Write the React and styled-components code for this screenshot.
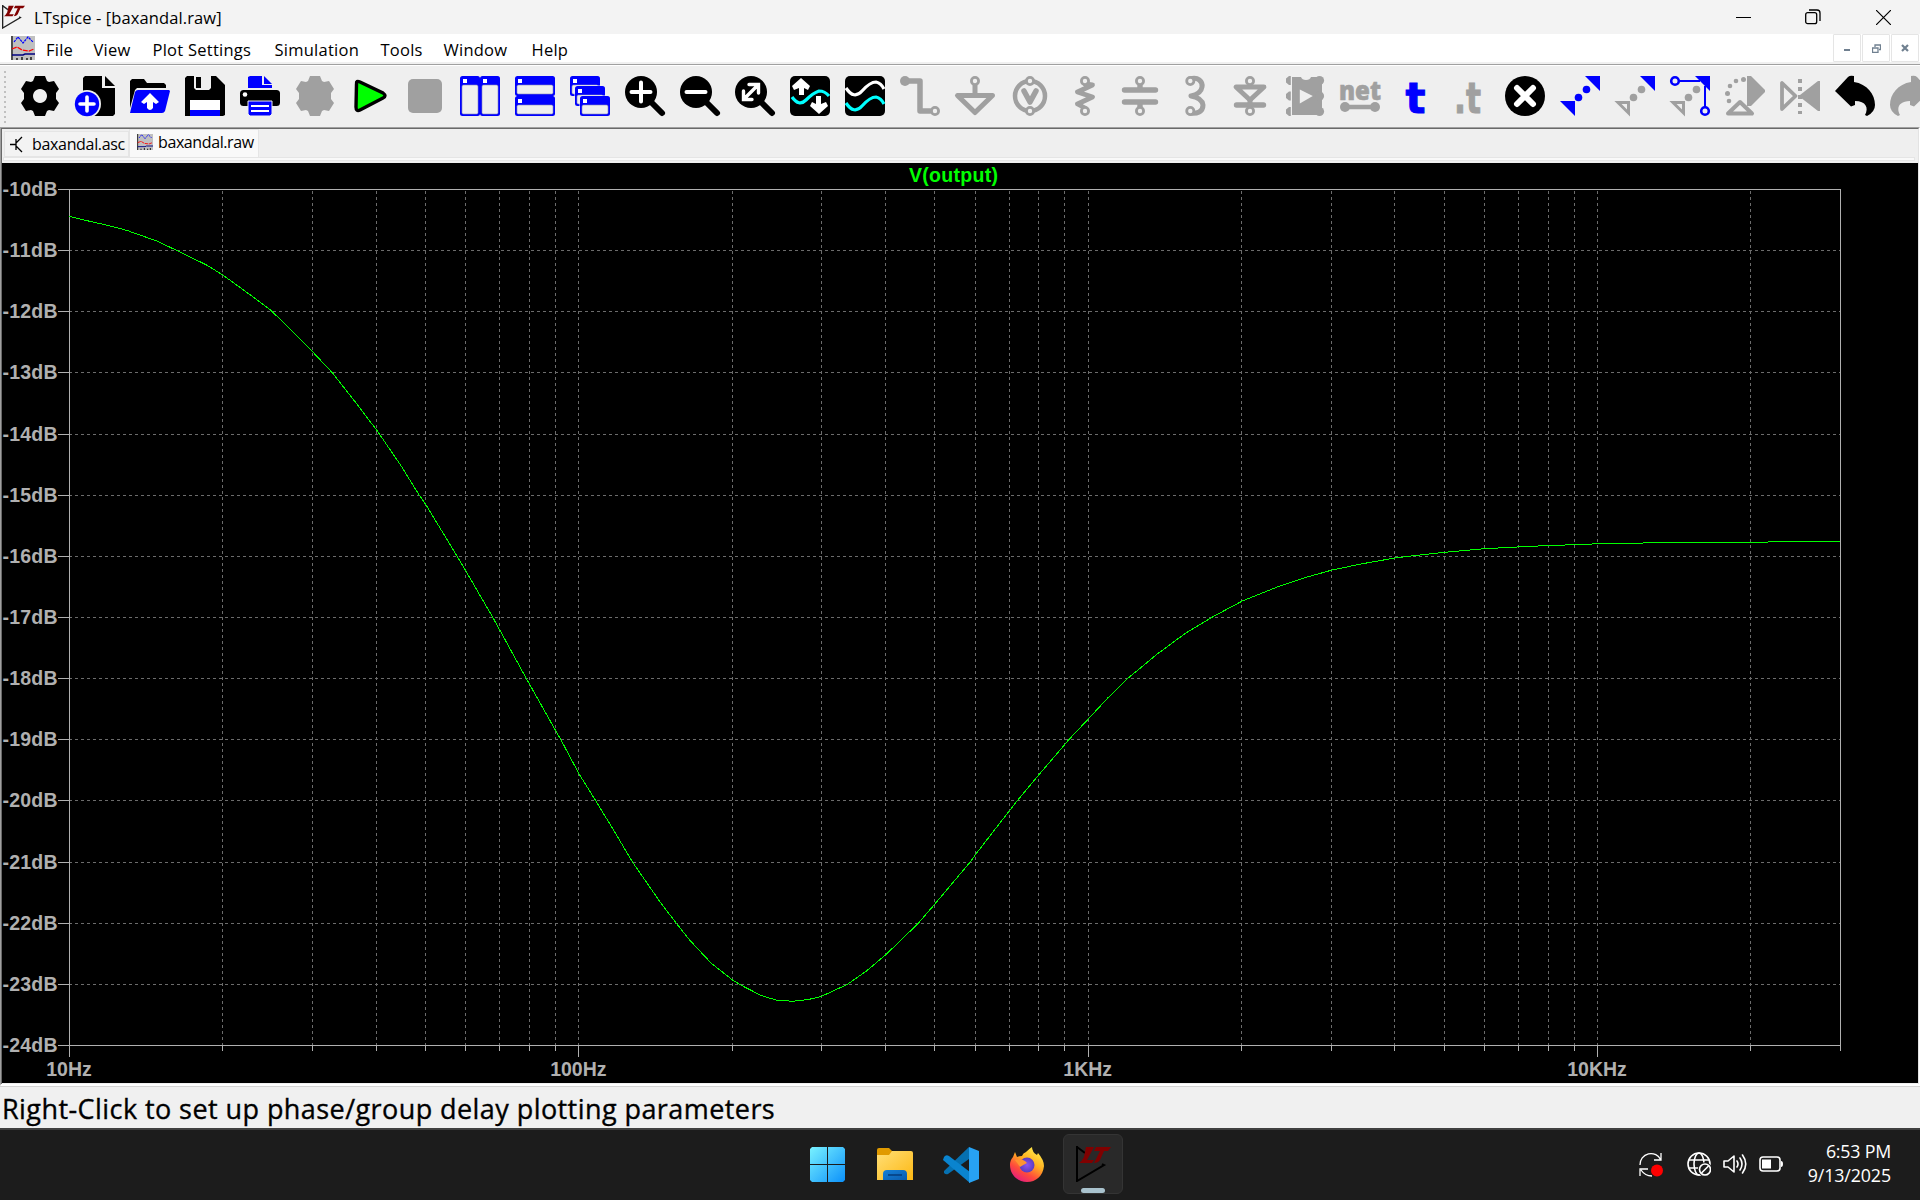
import React from 'react';
import styled, { createGlobalStyle } from 'styled-components';

const UI = '"Open Sans", "Noto Sans", sans-serif';
const GRAY = '#a0a0a0';
const BLUE = '#0000ff';
const FACE = '#efefef';

const Global = createGlobalStyle`
  *{box-sizing:border-box}
  html,body{margin:0;padding:0;background:${FACE};overflow:hidden}
  body{font-family:${UI};color:#000}
  svg{display:block;flex:none}
`;

const Desktop = styled.div`width:1920px;height:1200px;display:flex;flex-direction:column;overflow:hidden;background:${FACE};`;
const TitleBar = styled.header`height:34px;flex:none;background:#f3f3f3;display:flex;align-items:center;padding-left:2px;`;
const Label = styled.span`
  font-size:${p => p.$size || 16}px;letter-spacing:${p => p.$ls || 0}px;
  width:${p => (p.$w ? p.$w + 'px' : 'auto')};margin-left:${p => p.$ml || 0}px;
  -webkit-text-stroke:${p => p.$heavy || 0}px currentColor;padding-top:${p => p.$drop || 0}px;
  white-space:nowrap;line-height:1.2;flex:none;
`;
const Spacer = styled.div`flex:1;`;
const WindowButton = styled.div`width:${p => p.$w}px;height:34px;display:flex;align-items:center;justify-content:center;`;
const MenuBar = styled.nav`height:28px;flex:none;background:#fff;display:flex;align-items:center;padding-left:11px;`;
const MdiButton = styled.div`width:28px;height:28px;margin-right:1px;border:1px solid #e5e5e5;border-radius:1px;background:#fff;display:flex;align-items:center;justify-content:center;`;
const MenuEdge = styled.div`height:4px;flex:none;border-top:2px solid #f0f0f0;background:linear-gradient(#a0a0a0 0 1px,#fff 1px 2px);`;
const ToolBar = styled.div`height:61px;flex:none;display:flex;align-items:flex-start;padding:10px 0 0 4px;overflow:hidden;`;
const Grip = styled.div`width:2px;height:53px;margin:-5px 14px 0 0;flex:none;background:repeating-linear-gradient(#c0c0c0 0 2px,transparent 2px 5px);`;
const Tool = styled.button`all:unset;flex:none;width:40px;height:40px;margin-right:15px;`;
const Workspace = styled.main`flex:none;height:959px;border-top:1px solid #a0a0a0;border-left:1px solid #a0a0a0;border-right:1px solid #fff;border-bottom:2px solid #fff;`;
const WorkInner = styled.div`height:100%;border-top:1px solid #696969;border-left:1px solid #696969;border-right:1px solid #e3e3e3;display:flex;flex-direction:column;`;
const TabStrip = styled.div`height:28px;flex:none;display:flex;align-items:flex-end;padding-left:2px;`;
const Tab = styled.div`
  height:${p => (p.$active ? 28 : 26)}px;width:${p => (p.$active ? 130 : 125)}px;display:flex;align-items:center;
  border:1px solid #e5e5e5;border-bottom:${p => (p.$active ? '0' : '1px solid #e5e5e5')};
  background:${p => (p.$active ? '#f9f9f9' : '#f3f3f3')};padding:0 0 ${p => (p.$active ? 4 : 0)}px ${p => (p.$active ? 7 : 5)}px;
`;
const PaneEdge = styled.div`height:4px;margin:0 3px 2px 1px;border:1px solid #e5e5e5;background:#f9f9f9;flex:none;`;
const StatusBar = styled.footer`height:42px;flex:none;border-top:1px solid #d4d4d4;background:#f0f0f0;display:flex;align-items:center;padding-left:2px;`;
const Taskbar = styled.div`height:72px;flex:none;border-top:2px solid #404040;background:#1c1c1c;display:flex;align-items:center;color:#fff;`;
const Apps = styled.div`margin-left:810px;display:flex;align-items:center;gap:31px;height:70px;padding-bottom:1px;`;
const AppTile = styled.div`width:60px;height:60px;margin-left:-12px;border-radius:6px;background:#292929;border:1px solid #343434;display:flex;flex-direction:column;align-items:center;justify-content:flex-end;margin-top:-1px;`;
const Running = styled.div`width:24px;height:5px;border-radius:3px;background:#a9c2cd;margin-top:6px;`;
const Tray = styled.div`display:flex;align-items:center;gap:12px;margin-right:24px;padding-bottom:2px;`;
const Clock = styled.div`display:flex;flex-direction:column;align-items:flex-end;width:84px;margin-right:29px;gap:3px;padding-bottom:3px;`;

const GEAR = 'M15 0H25L27 5L29 6L34 5L39 13L36 17V23L39 27L34 35L29 34L27 35L25 40H15L13 35L11 34L6 35L1 27L4 23V17L1 13L6 5L11 6L13 5Z';
const Ring = ({ x, y, c = GRAY, r = 3.6, w = 2.8, fill = FACE }) => <circle cx={x} cy={y} r={r} stroke={c} strokeWidth={w} fill={fill} />;
const Pane = ({ x, y, w, h }) => (
  <g>
    <rect x={x} y={y} width={w} height={h} rx="2.5" fill={BLUE} />
    <rect x={x + 2} y={y + 9} width={w - 4} height={h - 11} rx="1.5" fill={FACE} stroke="#8888b8" strokeWidth=".6" />
    <rect x={x + 3} y={y + 3} width="4" height="4" fill="#fff" />
  </g>
);
const Lens = ({ children }) => (
  <g>
    <path d="M25 25L37 37" stroke="#000" strokeWidth="6" strokeLinecap="round" />
    <circle cx="16" cy="16" r="16" />
    <g stroke="#fff" strokeWidth="4" fill="none" strokeLinecap="round">{children}</g>
  </g>
);
const g = { stroke: GRAY, fill: 'none', strokeLinejoin: 'round', strokeLinecap: 'round' };
const LowTriangle = () => <path d="M3 26.5H13.5V37Z" fill="none" stroke={GRAY} strokeWidth="3" />;
const HighTriangle = () => <path d="M25 0H40V15Z" fill={BLUE} />;
const Dots = ({ c }) => <g fill={c}><circle cx="26.5" cy="13.5" r="3.8" /><circle cx="18.5" cy="21.5" r="3.8" /></g>;
const UNDO = 'M0 15L13 1Q15 -1 19 0V6C32 8 40 18 40 29Q40 36 32 40L30 39C34 32 31 25 20 25V29L16 30.5Z';

const TOOLS = [
  ['Settings', <path d={GEAR + 'M20 13a7 7 0 1 0 .01 0Z'} fillRule="evenodd" />],
  ['New', <><path d="M10 0H27V12H40V38L38 40H10L8 38V2Z" /><path d="M30 0L40 10H30Z" /><circle cx="12" cy="28" r="14" fill={FACE} /><circle cx="12" cy="28" r="12.2" fill={BLUE} /><path d="M12 21V35M5 28H19" stroke="#fff" strokeWidth="3.6" strokeLinecap="round" /></>],
  ['Open', <><path d="M0 5L2 3H14L17 7H34L36 9V12H7L5 14L0 32Z" /><path d="M8 14H39L40 15L35 35Q34 37 32 37H0L5 16Q6 14 8 14Z" fill={BLUE} /><path d="M20 17L29 26L26 28L23 26V32Q20 36 17 32V26L14 28L11 26Z" fill="#fff" /></>],
  ['Save', <><path d="M2 0H31L40 9V39L38 40H0V2Z" /><path d="M9 0H26V12L24 14H11L9 12Z" fill={FACE} /><rect x="11" y="1" width="5" height="11" /><rect x="5" y="24" width="30" height="10" fill="#fff" /><rect x="5" y="34" width="30" height="6" fill={BLUE} /></>],
  ['Print', <><path d="M8 1L10 0H22V9H32V12H8ZM24 0L32 8H24Z" fill={BLUE} /><rect y="14" width="40" height="16" rx="3.5" /><path d="M8 25H32V38L30 40H10L8 38Z" fill={BLUE} stroke={FACE} strokeWidth="1" /><path d="M11 30H29M11 35H29" stroke="#fff" strokeWidth="2" /><circle cx="5" cy="18.5" r="2.3" fill="#fff" /></>],
  ['Control Panel', <path d={GEAR} fill={GRAY} />],
  ['Run', <path d="M6.5 8Q6 4 10 6L33 17Q37 20 33 22L10 34Q6 36 6 31Z" fill="#00ff00" stroke="#000" strokeWidth="3.4" />],
  ['Stop', <rect x="3" y="3" width="34" height="34" rx="5" fill={GRAY} />],
  ['Tile Vertically', <><Pane x={0} y={0} w={20} h={40} /><Pane x={20} y={0} w={20} h={40} /></>],
  ['Tile Horizontally', <><Pane x={0} y={0} w={40} h={20} /><Pane x={0} y={20} w={40} h={20} /></>],
  ['Cascade', <><Pane x={0} y={0} w={30} h={20} /><rect x="4.5" y="9.5" width="31" height="21" fill={FACE} rx="2" /><Pane x={5} y={10} w={30} h={20} /><rect x="9.5" y="19.5" width="31" height="21" fill={FACE} rx="2" /><Pane x={10} y={20} w={30} h={20} /></>],
  ['Zoom In', <Lens><path d="M16 6.5V25.5M6.5 16H25.5" /></Lens>],
  ['Zoom Out', <Lens><path d="M6.5 16H25.5" /></Lens>],
  ['Zoom Fit', <Lens><path d="M9 23L23 9M14 8.5H23.5V17M8.5 15V23.5H17" strokeWidth="3.4" /></Lens>],
  ['Autorange', <><rect width="40" height="40" rx="5" /><path d="M2 21Q9 31 16 24T29 15Q35 15 39 20" stroke="#00ffff" strokeWidth="3.2" fill="none" /><path d="M11 2L20 10L18 14L14 12V19H9V12L4 14L2 10ZM29 38L20 30L22 26L26 28V20H31V28L36 26L38 30Z" fill="#fff" /></>],
  ['Waveforms', <><rect width="40" height="40" rx="5" /><path d="M1 12Q9 24 17 15T31 6Q36 7 39 13" stroke="#fff" strokeWidth="3.2" fill="none" /><path d="M1 27Q9 39 17 30T31 21Q36 22 39 28" stroke="#00ffff" strokeWidth="3.2" fill="none" /></>],
  ['Wire', <><path d="M5 5H20V35H30" {...g} strokeWidth="5.5" /><circle cx="5" cy="5" r="5" fill={GRAY} /><Ring x={35} y={35} /></>],
  ['Ground', <><path d="M20 9V18M2.5 19.5H37.5L20 36.5Z" {...g} strokeWidth="5" /><Ring x={20} y={5} /></>],
  ['Voltage', <><circle cx="20" cy="20" r="15" {...g} strokeWidth="4.5" /><path d="M14 15L20 26L26 15" {...g} strokeWidth="5.5" /><Ring x={20} y={5} /><Ring x={20} y={35} /></>],
  ['Resistor', <><path d="M20 8L27.5 9L12.5 16L27.5 21L12.5 28L20 32" {...g} strokeWidth="4.8" /><Ring x={20} y={5} /><Ring x={20} y={35} /></>],
  ['Capacitor', <><path d="M4.5 14H35.5M4.5 26H35.5M20 9V14M20 26V31" {...g} strokeWidth="5.4" /><Ring x={20} y={5} /><Ring x={20} y={35} /></>],
  ['Inductor', <><path d="M15 3C23 0 28 6 27 11Q26 18 16 20Q27 22 28 29C28 36 22 38 15 37" {...g} strokeWidth="5" /><Ring x={15.3} y={5} /><Ring x={15.3} y={35} /></>],
  ['Diode', <><path d="M6 11H34L20 24Z" {...g} strokeWidth="4.8" /><path d="M6.5 29H33.5" {...g} strokeWidth="5.4" /><path d="M20 24V30" {...g} strokeWidth="5" /><Ring x={20} y={5} /><Ring x={20} y={35} /></>],
  ['Component', <><path d="M7 1H16Q17 4 21 4Q25 4 26 1H37V39H7Z" fill={GRAY} /><g fill={GRAY}>{[4.5, 20, 35.5].map(y => <g key={y}><path d={`M5.8 ${y - 4.5}V${y + 4.5}H4L1 ${y + 2}V${y - 2}L4 ${y - 4.5}Z`} /><circle cx="34.5" cy={y} r="4.6" /></g>)}</g><path d="M14.8 13.5L27.8 20L14.8 27.5Z" fill={FACE} /></>],
  ['Net', <><text x="-1" y="23.5" textLength="42" lengthAdjust="spacingAndGlyphs" fontFamily="Open Sans" fontWeight="800" fontSize="26" fill={GRAY} stroke={GRAY} strokeWidth=".6">net</text><path d="M5 31H35" {...g} strokeWidth="4.6" /><circle cx="5" cy="31" r="5" fill={GRAY} /><circle cx="35" cy="31" r="5" fill={GRAY} /></>],
  ['Text', <text x="10.5" y="36.5" textLength="20" lengthAdjust="spacingAndGlyphs" fontFamily="DejaVu Sans" fontWeight="700" fontSize="43" fill={BLUE} stroke={BLUE} strokeWidth="1">t</text>],
  ['Directive', <text x="4" y="36.5" textLength="27" lengthAdjust="spacingAndGlyphs" fontFamily="DejaVu Sans" fontWeight="700" fontSize="43" fill={GRAY} stroke={GRAY} strokeWidth="1">.t</text>],
  ['Delete', <><circle cx="20" cy="20" r="20" /><path d="M12 12L28 28M28 12L12 28" stroke="#fff" strokeWidth="6" strokeLinecap="round" /></>],
  ['Move', <><HighTriangle /><Dots c={BLUE} /><path d="M0 25H15V40Z" fill={BLUE} /></>],
  ['Copy', <><HighTriangle /><Dots c={GRAY} /><LowTriangle /></>],
  ['Drag', <><HighTriangle /><Dots c={GRAY} /><LowTriangle /><path d="M8 5H30M35 10V32" stroke={BLUE} strokeWidth="2" /><Ring x={5} y={5} c={BLUE} r={3.8} w={2.6} /><Ring x={35} y={35} c={BLUE} r={3.8} w={2.6} /></>],
  ['Rotate', <><path d="M22 0H26L40 14V16L26 30H22Z" fill={GRAY} /><path d="M3 37.5L15 26L27 37.5Z" {...g} strokeWidth="4" /><g fill={GRAY}><circle cx="18.5" cy="3.5" r="2.5" /><circle cx="11" cy="5" r="2.3" /><circle cx="5" cy="10" r="2.3" /><circle cx="2.5" cy="17.5" r="2.5" /><circle cx="4" cy="25" r="2.3" /></g></>],
  ['Mirror', <><path d="M2 7V33L15.5 20Z" {...g} strokeWidth="3.8" /><path d="M20 3V38" stroke={GRAY} strokeWidth="4" strokeDasharray="4 4" /><path d="M38 5H40V35H38L20 21V19Z" fill={GRAY} /></>],
  ['Undo', <path d={UNDO} />],
  ['Redo', <path d={UNDO} transform="translate(40 0) scale(-1 1)" fill={GRAY} />],
];

const LtLogo = ({ s, dark }) => (
  <svg width={s} height={s * 1.03} viewBox="0 0 35 36">
    <path d="M1 1L9 7M1 0V35L28 19L26 18" fill="none" stroke={dark ? '#000' : '#222'} strokeWidth="2" />
    <path d="M10 1H18L11 14H18L16 17H3Q6 15 8 11ZM20 1H35L32 5H28L24 14Q22 17 18 17L24 5H18Z" fill="#800000" />
  </svg>
);
const WaveIcon = ({ w, h }) => (
  <svg width={w} height={h} viewBox="0 0 24 24" preserveAspectRatio="none">
    <rect width="24" height="24" fill="#c0c0c0" />
    <path d="M1 0V24" stroke="#000" strokeWidth="1.2" />
    <path d="M3 6L7 1L12 7L17 1L22 6" stroke="#0000ff" fill="none" strokeWidth="1.2" strokeDasharray="2.5 .8" />
    <path d="M1 13L6 11L11 14L18 15L23 13" stroke="#f00" fill="none" strokeWidth="1.3" strokeDasharray="5 1" />
    <path d="M1 19H12L14 18H24" stroke="#000080" fill="none" strokeWidth="1.4" />
    <path d="M6 24V22M11 24V21M16 24V22M20 24V21" stroke="#000" strokeWidth="1.3" />
  </svg>
);

/* Trace samples in window pixels; OX and OY are the plot's origin */
const TRACE = [
  [69, 216.5], [88, 221], [108, 225.5], [126.7, 230.5], [156.7, 241.2], [176.7, 250.7], [206.7, 265.3], [222.3, 275], [245, 291.4], [270, 310],
  [291, 330.2], [312.3, 352], [331.7, 372.6], [354, 401], [376.7, 430.8], [400.7, 466], [418.3, 494.5], [425.7, 505.1], [456.7, 556.5], [465.7, 571.6], [492.3, 617.4],
  [499.3, 630.1], [525.7, 678.3], [555.3, 730.9], [560.3, 739.6], [578.6, 774], [595.2, 800.7], [614, 831.7], [632.8, 863.3], [646.3, 882.7],
  [661, 904], [676.2, 923.7], [689.1, 940], [710.8, 963.3], [732.5, 980.3], [740.2, 985], [760.7, 995.5], [775.4, 1000], [791.8, 1001.3], [807.6, 999.6],
  [821.1, 996.3], [847, 984.3], [866.3, 970.7], [885.7, 954.3], [917.4, 923.7], [934.4, 904], [970.8, 860.7], [975.4, 854], [1009.5, 810],
  [1017.1, 800.3], [1038.2, 775], [1068.7, 739.3], [1088.7, 718], [1107.5, 697.7], [1127.4, 678.3], [1156.8, 654], [1184.9, 633.3], [1212.5, 616.7],
  [1241.8, 601], [1280, 585.7], [1303.4, 578], [1331.6, 570], [1362.1, 563.7], [1394.4, 558], [1410.2, 556], [1444.3, 552.3], [1484.2, 548.7],
  [1530, 546.3], [1597, 543.8], [1660, 542.7], [1740, 542.2], [1840, 541.5],
];
const OX = 2, OY = 163;
const L = 69 - OX, R = 1840 - OX, T = 189 - OY, B = 1045 - OY, DEC = 509.35;
const freqX = f => Math.round(L + DEC * Math.log10(f / 10)) + 0.5;
const dbY = n => Math.round(T + ((B - T) * n) / 14) + 0.5;
const MINOR = [];
[10, 100, 1000, 10000].forEach(d => { for (let k = 1; k < 10; k++) if (d * k > 10 && d * k < 30000) MINOR.push(d * k); });

const Plot = () => (
  <svg width="1916" height="920" viewBox="0 0 1916 920" fontFamily='"Liberation Sans", sans-serif' fontWeight="700" fontSize="19.5">
    <rect width="1916" height="920" fill="#000" />
    <g stroke="#6c6c6c" strokeDasharray="3 3" shapeRendering="crispEdges">
      {MINOR.map(f => <path key={f} d={`M${freqX(f)} ${T + 2}V${B}`} />)}
      {Array.from({ length: 13 }, (_, i) => <path key={i} d={`M${L} ${dbY(i + 1)}H${R}`} />)}
    </g>
    <g stroke="#b0b0b0" fill="none" shapeRendering="crispEdges">
      <path d={`M${L + .5} ${B}V${T + .5}H${R + .5}V${B + 6}M${L} ${B + .5}H${R}`} />
      {Array.from({ length: 15 }, (_, i) => <path key={i} d={`M${L - 11} ${dbY(i)}H${L}`} />)}
      {MINOR.map(f => <path key={f} d={`M${freqX(f)} ${B}v${[100, 1000, 10000].includes(f) ? 12 : 6}`} />)}
      <path d={`M${L + .5} ${B}v12`} />
    </g>
    <polyline points={TRACE.map(([x, y]) => `${x - OX + .5},${y - OY}`).join(' ')} fill="none" stroke="#00ff00" shapeRendering="crispEdges" />
    <g fill="#b0b0b0">
      {Array.from({ length: 15 }, (_, i) => <text key={i} x="0.5" y={dbY(i) + 6.5} textLength="55">{`-${10 + i}dB`}</text>)}
      {['10Hz', '100Hz', '1KHz', '10KHz'].map((s, i) => <text key={s} x={L + DEC * i} y="912.5" textAnchor="middle">{s}</text>)}
    </g>
    <text x="951.5" y="18.5" textAnchor="middle" textLength="89" fill="#00ff00">V(output)</text>
  </svg>
);

const Start = () => (
  <svg width="35" height="35"><defs><linearGradient id="win" x2="1" y2="1"><stop stopColor="#79f2ff" /><stop offset="1" stopColor="#0c91fa" /></linearGradient></defs>
    <path fill="url(#win)" d="M2 0H17V17H0V2ZM18 0H33L35 2V17H18ZM0 18H17V35H2L0 33ZM18 18H35V33L33 35H18Z" /></svg>
);
const Explorer = () => (
  <svg width="36" height="35" viewBox="-1 0 36 35" overflow="visible"><defs><linearGradient id="fold" x2="1" y2="1"><stop stopColor="#ffdf77" /><stop offset="1" stopColor="#fdb813" /></linearGradient><linearGradient id="fb" y2="1"><stop stopColor="#1580d8" /><stop offset="1" stopColor="#0b5cae" /></linearGradient></defs>
    <path d="M0 3Q0 1 2 1H12L15 4V10H0Z" fill="#e09a00" /><path d="M0 8H12L15 4H34Q36 4 36 6V33H0Z" fill="url(#fold)" />
    <path d="M6 33V27Q6 23 10 23H26Q30 23 30 27V33Z" fill="url(#fb)" /><path d="M11 28H25" stroke="#063f80" strokeWidth="1.6" /></svg>
);
const Code = () => (
  <svg width="36" height="36" viewBox="0 0 36 36"><path d="M1 24L26 0V12L5 27Q3 28 1 26Z" fill="#0670b0" /><path d="M1 10Q3 7 6 9L27 25V36L0 13Z" fill="#0a84cf" /><path d="M26 0L36 4V32L26 36Z" fill="#27a2f3" /></svg>
);
const Firefox = () => (
  <svg width="34" height="35" viewBox="0 0 34 35"><defs><linearGradient id="ffx" x1=".8" y1="0" x2=".2" y2="1"><stop stopColor="#fff14f" /><stop offset=".4" stopColor="#ffb020" /><stop offset=".7" stopColor="#ff4a3c" /><stop offset="1" stopColor="#e0158a" /></linearGradient><radialGradient id="ffp"><stop stopColor="#8c54f0" /><stop offset="1" stopColor="#5a3cc0" /></radialGradient></defs>
    <path d="M5 5L7 10Q9 9 12 9Q13 6 16 5Q19 2 22 0Q22 5 27 8L28 6Q34 13 34 19C33 29 26 35 17 35C8 35 0 28 0 18Q0 13 3 10Z" fill="url(#ffx)" />
    <circle cx="17" cy="18" r="7.5" fill="url(#ffp)" /><path d="M5 13Q11 11 15 14L17 16Q13 18 10 20Q8 17 5 13Z" fill="#ff9530" /></svg>
);
const stroke = { fill: 'none', stroke: '#fff', strokeWidth: 1.6 };
const Sync = () => <svg width="24" height="25" viewBox="0 0 24 25"><path d="M1 13A11 11 0 0 1 22 8M22 1V8H15M1 24V17H9M2 18Q6 24 13 24" {...stroke} strokeWidth="1.3" /><circle cx="18" cy="18.5" r="6" fill="#f00" /></svg>;
const Globe = () => <svg width="24" height="24" viewBox="0 0 24 24"><g {...stroke}><circle cx="12" cy="12" r="11" /><ellipse cx="12" cy="12" rx="5" ry="11" /><path d="M2 8H22M2 16H12" /></g><circle cx="18" cy="17.5" r="7.2" fill="#1c1c1c" /><circle cx="18" cy="17.5" r="5.5" {...stroke} /><path d="M14.5 21L21.5 14" {...stroke} /></svg>;
const Speaker = () => <svg width="24" height="24" viewBox="0 0 24 24" strokeLinecap="round" strokeLinejoin="round"><path d="M1 9V15H5L11 20V4L5 9ZM14 9Q16 12 14 15M17 6Q21 12 17 18M19.5 3Q26 12 19.5 21" {...stroke} /></svg>;
const Battery = () => <svg width="24" height="16" viewBox="0 0 24 16"><rect x="1" y="1" width="20" height="14" rx="3" {...stroke} /><rect x="3" y="3.5" width="9" height="9" fill="#fff" /><path d="M22 5Q24 5 24 8T22 11Z" fill="#fff" /></svg>;

const MENUS = [['File', 47.5], ['View', 59], ['Plot Settings', 122], ['Simulation', 106], ['Tools', 63], ['Window', 88], ['Help', 50]];

export default function App() {
  return (
    <Desktop>
      <Global />
      <TitleBar>
        <LtLogo s={23} />
        <Label $ml={9} $size={16.5} $ls={0.1} $drop={1}>LTspice - [baxandal.raw]</Label>
        <Spacer />
        <WindowButton $w={69}><svg width="15" height="15"><path d="M0 7.5H15" stroke="#000" /></svg></WindowButton>
        <WindowButton $w={69}><svg width="16" height="16"><rect x=".7" y="3.7" width="11" height="11" rx="2" fill="none" stroke="#000" strokeWidth="1.3" /><path d="M4 1H12Q15 1 15 4V12" fill="none" stroke="#000" strokeWidth="1.3" /></svg></WindowButton>
        <WindowButton $w={73}><svg width="15" height="15"><path d="M0 0L15 15M15 0L0 15" stroke="#000" strokeWidth="1.2" /></svg></WindowButton>
      </TitleBar>
      <MenuBar>
        <WaveIcon w={24} h={24} />
        {MENUS.map(([m, w], i) => <Label key={m} $w={w} $ml={i ? 0 : 11} $size={16.5} $ls={0.25} $drop={3}>{m}</Label>)}
        <Spacer />
        <MdiButton><svg width="8" height="10"><path d="M1 7H7" stroke="#708090" strokeWidth="2" /></svg></MdiButton>
        <MdiButton><svg width="9" height="9"><path d="M.5 4H6V8.5H.5ZM3 3V1H8.5V5.5H7" fill="none" stroke="#708090" strokeWidth="1.3" /></svg></MdiButton>
        <MdiButton><svg width="8" height="8"><path d="M1 1L7 7M7 1L1 7" stroke="#708090" strokeWidth="2.2" /></svg></MdiButton>
      </MenuBar>
      <MenuEdge />
      <ToolBar>
        <Grip />
        {TOOLS.map(([name, art]) => (
          <Tool key={name} aria-label={name}><svg width="40" height="40" viewBox="0 0 40 40" overflow="visible">{art}</svg></Tool>
        ))}
      </ToolBar>
      <Workspace>
        <WorkInner>
          <TabStrip>
            <Tab><svg width="13" height="17"><path d="M0 8.5H6M6 3V14M6 7L12 1M6 10L12 16" stroke="#000" fill="none" strokeWidth="1.3" /></svg><Label $ml={9} $size={16} $ls={-0.33} $drop={2}>baxandal.asc</Label></Tab>
            <Tab $active><WaveIcon w={16} h={16} /><Label $ml={5} $size={16} $ls={-0.4} $drop={2}>baxandal.raw</Label></Tab>
          </TabStrip>
          <PaneEdge />
          <Plot />
        </WorkInner>
      </Workspace>
      <StatusBar><Label $size={27} $ls={0.43} $heavy={0.35} $drop={4}>Right-Click to set up phase/group delay plotting parameters</Label></StatusBar>
      <Taskbar>
        <Apps>
          <Start /><Explorer /><Code /><Firefox />
          <AppTile><LtLogo s={35} dark /><Running /></AppTile>
        </Apps>
        <Spacer />
        <Tray><Sync /><Label /><Globe /><Speaker /><Battery /></Tray>
        <Clock><Label $size={17.8} $ls={-0.2}>6:53 PM</Label><Label $size={17.8} $ls={-0.1}>9/13/2025</Label></Clock>
      </Taskbar>
    </Desktop>
  );
}
